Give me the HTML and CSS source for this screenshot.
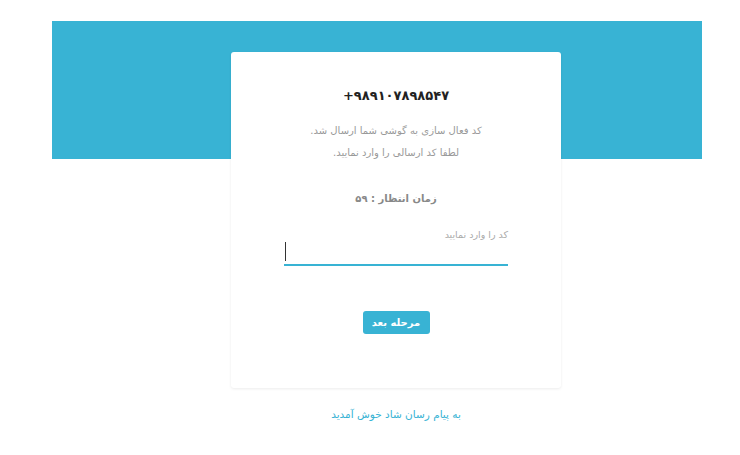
FILE: index.html
```html
<!DOCTYPE html>
<html lang="fa">
<head>
<meta charset="utf-8">
<link rel="stylesheet" href="styles.css">
</head>
<body>
<div class="page">
  <div class="band"></div>
  <div class="card">
    <div class="phone">+۹۸۹۱۰۷۸۹۸۵۴۷</div>
    <p class="msg">کد فعال سازی به گوشی شما ارسال شد.</p>
    <p class="msg">لطفا کد ارسالی را وارد نمایید.</p>
    <div class="timer">زمان انتظار : ۵۹</div>
    <div class="field">
      <label class="label">کد را وارد نمایید</label>
      <div class="input"><span class="caret"></span></div>
    </div>
    <button class="btn">مرحله بعد</button>
  </div>
  <div class="welcome">به پیام رسان شاد خوش آمدید</div>
</div>
</body>
</html>
```
FILE: styles.css
```css
html, body { margin: 0; padding: 0; background: #fff; }
body { font-family: "DejaVu Sans", sans-serif; }
.page { padding-top: 21px; }
.band { margin: 0 38px 0 52px; height: 138px; background: #38b3d4; }
.card {
  margin: -107px 0 0 231px;
  width: 330px; height: 336px;
  background: #fff;
  border-radius: 3px;
  box-shadow: 0 1px 3px rgba(0,0,0,0.08);
  display: flex; flex-direction: column; align-items: center;
  direction: rtl;
  box-sizing: border-box;
  padding-top: 35px;
}
.phone { direction: ltr; font-size: 13px; font-weight: bold; color: #222; line-height: 18px; }
.msg { margin: 0; font-size: 10px; color: #999; line-height: 22px; }
.phone + .msg { margin-top: 15px; }
.timer { margin-top: 27px; font-size: 10px; font-weight: bold; color: #888; line-height: 16px; }
.field { margin-top: 21px; width: 224px; display: flex; flex-direction: column; }
.label { font-size: 9.5px; color: #aaa; line-height: 14px; }
.input { margin-top: 0; height: 22px; border-bottom: 2px solid #38b3d4; display: flex; justify-content: flex-end; align-items: flex-start; }
.caret { width: 1px; height: 19px; background: #333; margin-left: 1px; }
.btn {
  margin-top: 45px; width: 67px; height: 23px; padding: 0;
  border: none; border-radius: 3px; background: #38b3d4; color: #fff;
  font-family: "DejaVu Sans", sans-serif; font-size: 10px; font-weight: bold;
}
.welcome { direction: rtl; margin: 19px 0 0 231px; width: 330px; text-align: center; font-size: 10.5px; color: #38b3d4; line-height: 14px; }
```
